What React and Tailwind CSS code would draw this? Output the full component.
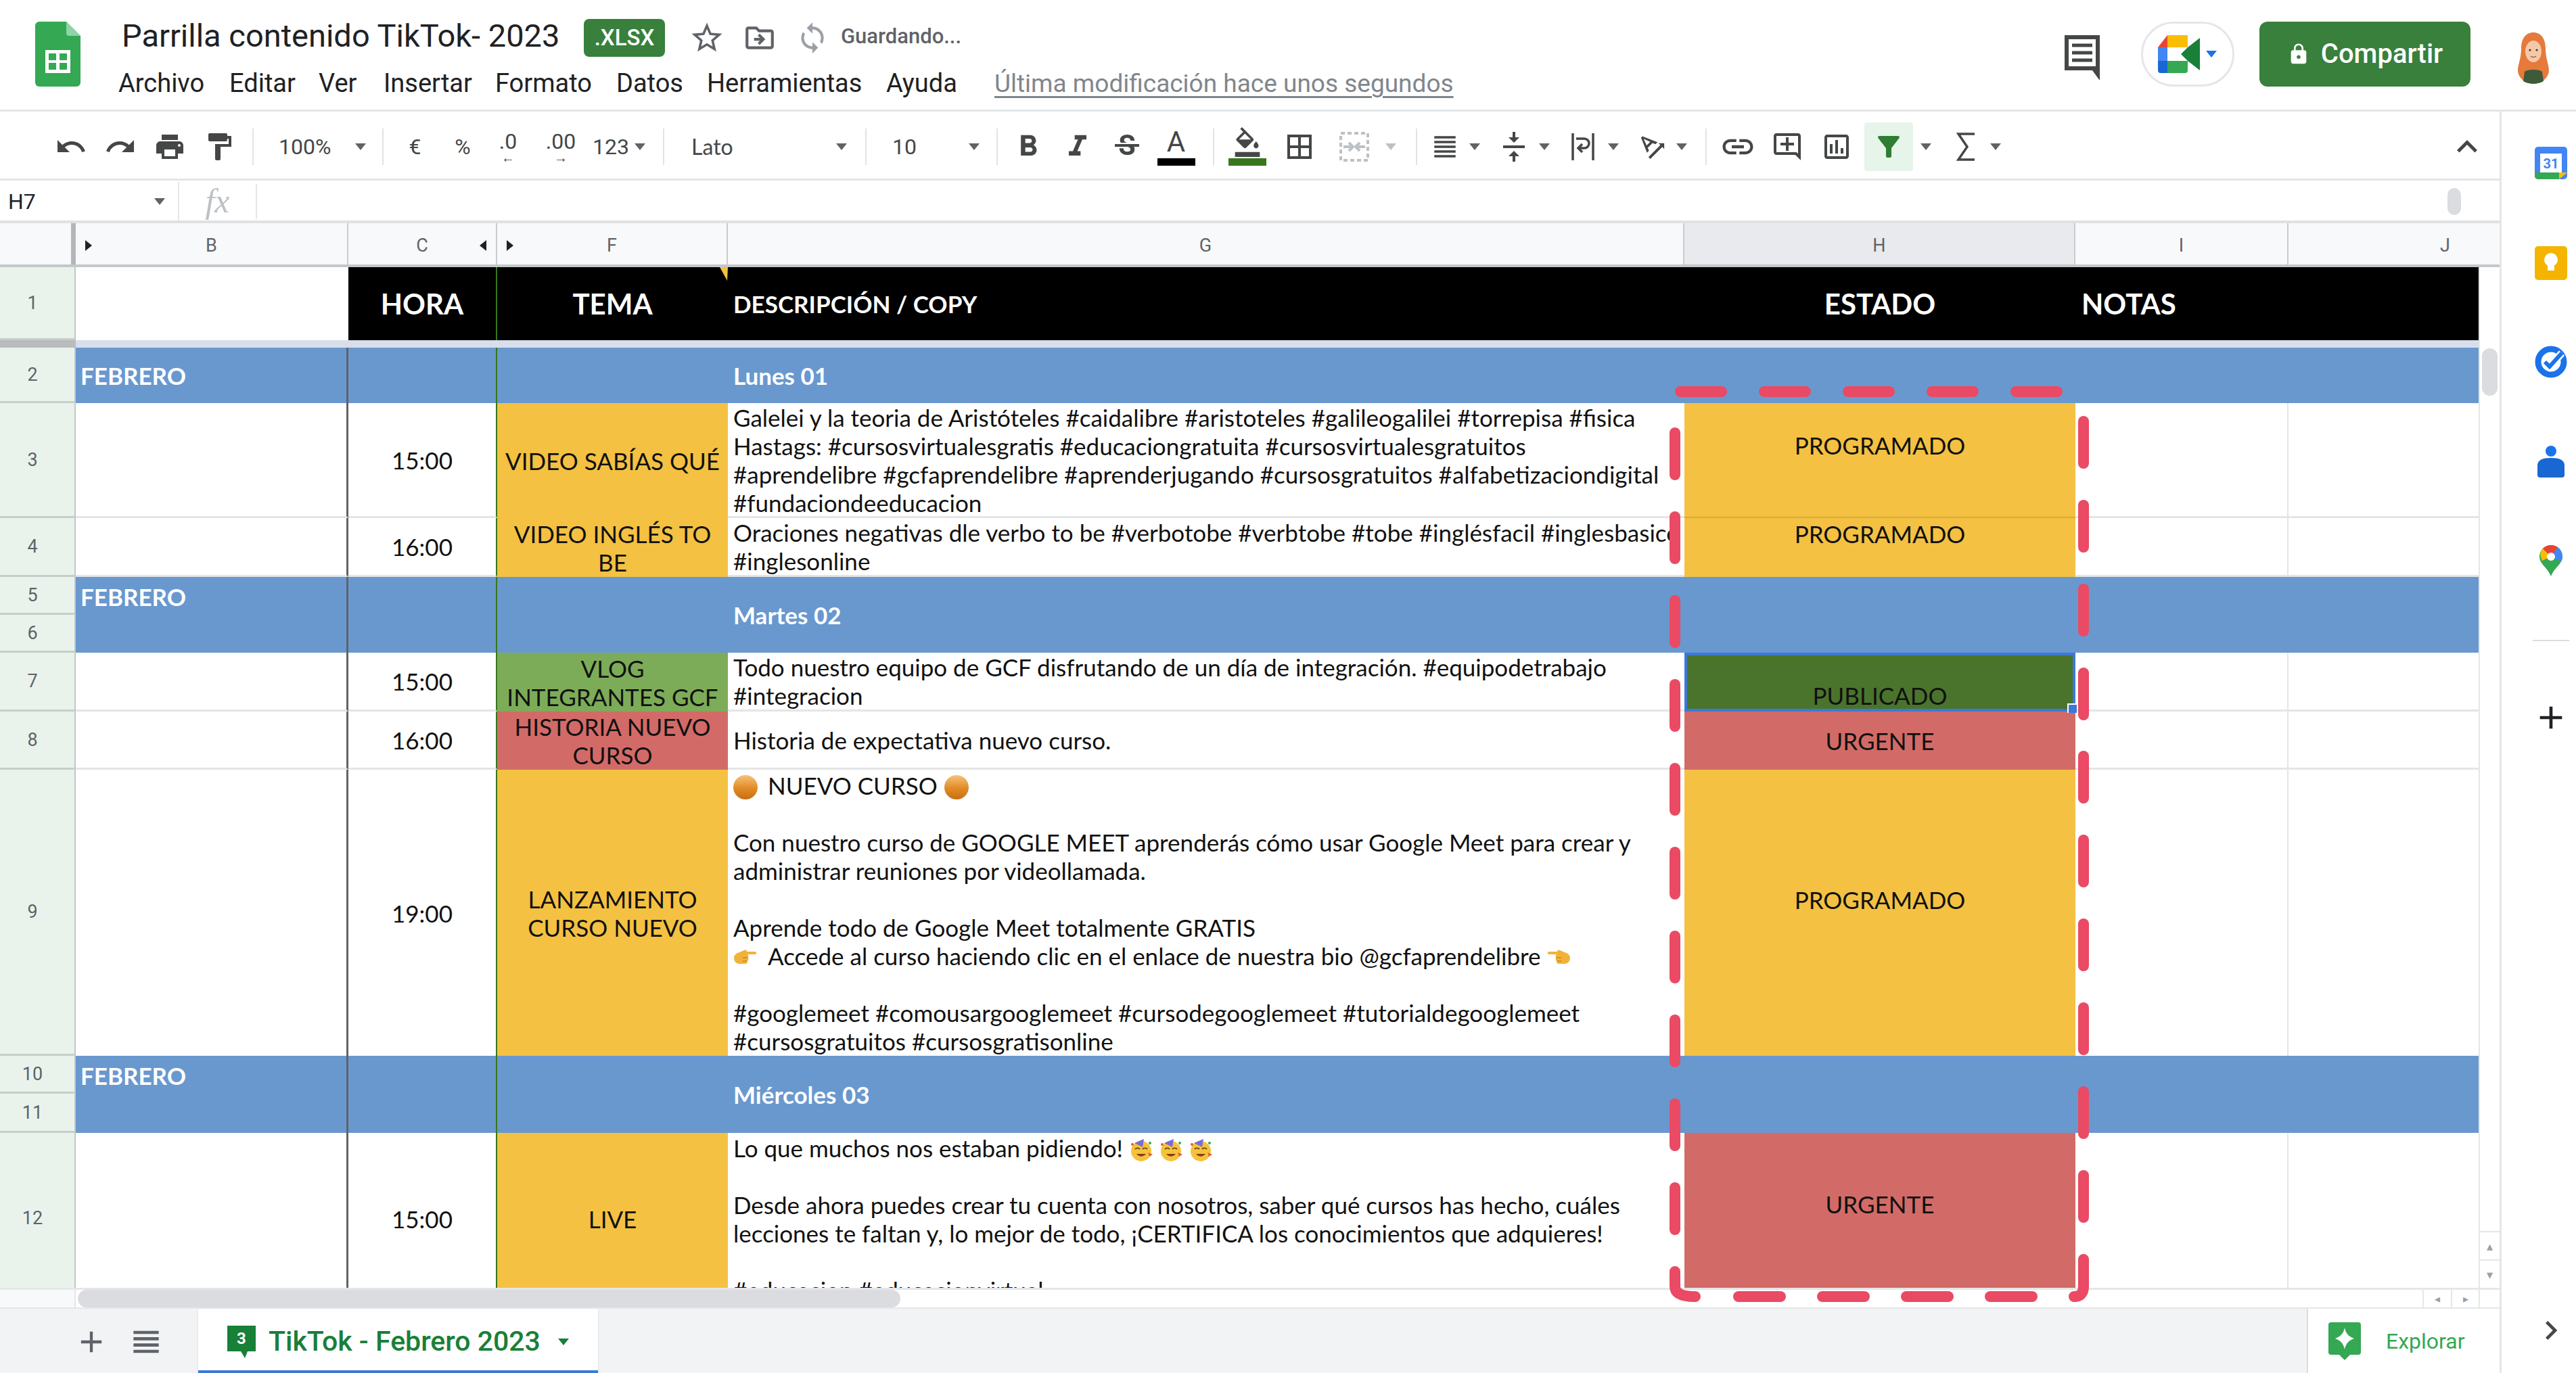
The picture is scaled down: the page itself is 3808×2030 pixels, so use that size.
import {
  MdUndo, MdRedo, MdPrint, MdFormatPaint, MdFormatBold, MdFormatItalic, MdStrikethroughS,
  MdFormatColorFill, MdBorderAll, MdFormatAlignJustify, MdVerticalAlignCenter,
  MdTextRotationAngleup, MdLink, MdOutlineAddComment, MdOutlineInsertChart, MdFilterAlt,
  MdStarBorder, MdOutlineDriveFileMove, MdSync, MdLock, MdKeyboardArrowUp, MdAdd, MdViewHeadline,
  MdChevronRight,
} from 'react-icons/md'

const ui = "font-['Roboto',sans-serif]"

const Caret = ({ className = 'ml-0', color = '#5f6368' }) => (
  <svg viewBox="0 0 18 10" className={`w-[18px] h-[10px] shrink-0 ${className}`}>
    <path d="M1 0h16l-8 10z" fill={color} />
  </svg>
)

const Sep = ({ className = '' }) => <div className={`w-[2px] h-[54px] bg-[#e1e3e6] shrink-0 ${className}`} />

const Tool = ({ className = 'w-[73px]', children }) => (
  <div className={`h-[72px] shrink-0 flex items-center justify-center ${className}`}>{children}</div>
)

const icon = 'size-[48px]'

function SheetsLogo() {
  return (
    <svg viewBox="0 0 67 96" className="w-[67px] h-[96px] ml-[52px] mt-[32px] shrink-0">
      <path d="M6 0h40l21 21v69a6 6 0 0 1-6 6H6a6 6 0 0 1-6-6V6a6 6 0 0 1 6-6z" fill="#34a853" />
      <path d="M46 0l21 21H50a4 4 0 0 1-4-4z" fill="#8fd3a6" />
      <path d="M15 42h37v34H15z" fill="#fff" />
      <path d="M20 47h11v10H20zM36 47h11v10H36zM20 61h11v10H20zM36 61h11v10H36z" fill="#34a853" />
    </svg>
  )
}

function MeetLogo() {
  return (
    <svg viewBox="0 0 62 56" className="w-[62px] h-[56px]">
      <path d="M14 0h30v18H14z" fill="#fbbc04" />
      <path d="M14 0v18H0z" fill="#ea4335" />
      <path d="M0 18h14v20H0z" fill="#4285f4" />
      <path d="M0 38h14v18H4a4 4 0 0 1-4-4z" fill="#1967d2" />
      <path d="M14 38h30v14a4 4 0 0 1-4 4H14z" fill="#34a853" />
      <path d="M44 18l18-14v48L44 38l-10-10z" fill="#188038" />
      <path d="M14 18h20v20H14z" fill="#fff" />
    </svg>
  )
}

function Avatar() {
  return (
    <svg viewBox="0 0 46 76" className="w-[46px] h-[76px]">
      <path d="M23 0c12 0 18 10 18 24 0 14 5 24 5 32 0 10-10 20-23 20S0 66 0 56c0-8 5-18 5-32C5 10 11 0 23 0z" fill="#e57a3c" />
      <path d="M10 58c4-4 22-4 26 0l2 14c-8 5-22 5-30 0z" fill="#3f5a3a" />
      <ellipse cx="23" cy="28" rx="12" ry="16" fill="#f5c9a8" />
      <circle cx="18" cy="26" r="1.6" fill="#4a3426" />
      <circle cx="28" cy="26" r="1.6" fill="#4a3426" />
      <path d="M19 35c2 2 6 2 8 0" stroke="#b5533c" strokeWidth="1.4" fill="none" />
    </svg>
  )
}

function TopBar() {
  return (
    <div className="h-[165px] shrink-0 flex border-b-[3px] border-[#e4e6e8] bg-white relative">
      <SheetsLogo />
      <div className="ml-[61px] flex flex-col">
        <div className="flex items-center mt-[28px] h-[56px]">
          <span className={`${ui} text-[47px] text-[#202124] w-[683px] whitespace-nowrap mb-[6px]`}>Parrilla contenido TikTok- 2023</span>
          <span className={`${ui} font-medium w-[120px] h-[56px] flex items-center justify-center bg-[#38803c] rounded-lg text-white text-[33px]`}>.XLSX</span>
          <MdStarBorder className="size-[54px] ml-[35px] text-[#5f6368]" />
          <MdOutlineDriveFileMove className="size-[50px] ml-[26px] text-[#5f6368]" />
          <MdSync className="size-[50px] ml-[28px] text-[#9aa0a6]" />
          <span className={`${ui} font-medium text-[31px] text-[#5f6368] ml-[17px] mb-[4px]`}>Guardando...</span>
        </div>
        <div className={`${ui} flex items-center mt-[11px] -ml-[5px] text-[38px] text-[#202124] whitespace-nowrap`}>
          <span className="w-[164px]">Archivo</span>
          <span className="w-[132px]">Editar</span>
          <span className="w-[96px]">Ver</span>
          <span className="w-[165px]">Insertar</span>
          <span className="w-[179px]">Formato</span>
          <span className="w-[134px]">Datos</span>
          <span className="w-[265px]">Herramientas</span>
          <span className="w-[160px]">Ayuda</span>
          <span className="text-[#80868b] text-[37px] underline decoration-[3px] underline-offset-[6px]">Última modificación hace unos segundos</span>
        </div>
      </div>
      <div className="ml-auto flex items-start pt-[32px]">
        <svg viewBox="0 0 52 66" className="w-[52px] h-[66px] mt-[20px]" fill="none" stroke="#444746">
          <path d="M3 3h46v46H3z" strokeWidth="6" />
          <path d="M11 15h30M11 26h30M11 37h30" strokeWidth="5" />
          <path d="M40 49h11v15z" fill="#444746" strokeWidth="2" />
        </svg>
        <div className="ml-[61px] w-[138px] h-[96px] rounded-full border-[3px] border-[#e4e6e8] flex items-center justify-center gap-[8px]">
          <MeetLogo />
          <Caret color="#1a73e8" />
        </div>
        <div className={`${ui} font-medium ml-[37px] w-[312px] h-[96px] rounded-xl bg-[#38803c] text-white text-[40px] flex items-center justify-center gap-[16px]`}>
          <MdLock className="size-[34px]" />
          Compartir
        </div>
        <div className="ml-[70px] mr-[40px] mt-[16px]"><Avatar /></div>
      </div>
    </div>
  )
}

function Toolbar() {
  return (
    <div className={`${ui} h-[102px] shrink-0 flex items-center pl-[68px] pt-[4px] border-b-[3px] border-[#e4e6e8] text-[#444746] text-[32px]`}>
      <Tool><MdUndo className={icon} /></Tool>
      <Tool><MdRedo className={icon} /></Tool>
      <Tool><MdPrint className={icon} /></Tool>
      <Tool><MdFormatPaint className={icon} /></Tool>
      <Sep className="ml-[13px]" />
      <div className="w-[190px] pl-[37px] flex items-center shrink-0">
        <span className="w-[112px]">100%</span>
        <Caret />
      </div>
      <Sep />
      <Tool className="w-[73px] ml-[10px]">€</Tool>
      <Tool className="w-[68px]">%</Tool>
      <Tool className="w-[66px] flex-col leading-[32px]"><span>.0</span><span className="text-[20px] leading-[16px]">←</span></Tool>
      <Tool className="w-[90px] flex-col leading-[32px]"><span>.00</span><span className="text-[20px] leading-[16px]">→</span></Tool>
      <Tool className="w-[58px]">123</Tool>
      <Caret className="ml-[5px]" />
      <Sep className="ml-[25px]" />
      <div className="pl-[40px] flex items-center shrink-0">
        <span className="w-[213px] font-['Lato',sans-serif]">Lato</span>
        <Caret />
      </div>
      <Sep className="ml-[26px]" />
      <div className="pl-[38px] flex items-center shrink-0">
        <span className="w-[112px]">10</span>
        <Caret />
      </div>
      <Sep className="ml-[24px]" />
      <Tool className="w-[73px] ml-[8px]"><MdFormatBold className="size-[52px]" /></Tool>
      <Tool><MdFormatItalic className="size-[52px]" /></Tool>
      <Tool><MdStrikethroughS className={icon} /></Tool>
      <Tool className="w-[73px] flex-col">
        <span className="text-[42px] leading-[44px]">A</span>
        <span className="w-[56px] h-[11px] bg-black mt-[2px]" />
      </Tool>
      <Sep className="ml-[18px]" />
      <Tool className="w-[73px] ml-[12px] flex-col">
        <MdFormatColorFill className="size-[44px]" />
        <span className="w-[56px] h-[11px] bg-[#38761d] mt-[2px]" />
      </Tool>
      <Tool className="w-[73px] ml-[4px]"><MdBorderAll className={icon} /></Tool>
      <Tool className="w-[73px] ml-[8px]">
        <svg viewBox="0 0 44 44" className="w-[44px] h-[44px]" fill="none" stroke="#bdc1c6" strokeWidth="4">
          <path d="M2 2h40v40H2z" strokeDasharray="6 4" />
          <path d="M6 22h12M38 22H26M14 16l6 6-6 6M30 16l-6 6 6 6" />
        </svg>
      </Tool>
      <Caret className="ml-[9px]" color="#bdc1c6" />
      <Sep className="ml-[28px]" />
      <Tool className="w-[70px] ml-[6px]"><MdFormatAlignJustify className="size-[42px]" /></Tool>
      <Caret />
      <Tool className="w-[72px] ml-[13px]"><MdVerticalAlignCenter className={icon} /></Tool>
      <Caret />
      <Tool className="w-[72px] ml-[12px]">
        <svg viewBox="0 0 36 44" className="w-[36px] h-[44px]" fill="none" stroke="#444746" strokeWidth="3.5">
          <path d="M3 2v40M33 2v40M8 10h12a7 7 0 0 1 0 14H13" />
          <path d="M17 18l-6 6 6 6" />
        </svg>
      </Tool>
      <Caret />
      <Tool className="w-[69px] ml-[14px]"><MdTextRotationAngleup className={icon} /></Tool>
      <Caret />
      <Sep className="ml-[26px]" />
      <Tool className="w-[72px] ml-[10px]"><MdLink className="size-[54px]" /></Tool>
      <Tool className="w-[72px] ml-[1px]"><MdOutlineAddComment className={icon} /></Tool>
      <Tool className="w-[72px] ml-[1px]"><MdOutlineInsertChart className={icon} /></Tool>
      <Tool className="w-[72px] ml-[5px] rounded bg-[#e6f4ea]"><MdFilterAlt className="size-[48px] text-[#2e7d32]" /></Tool>
      <Caret className="ml-[10px]" />
      <Tool className="w-[71px] ml-[14px]">
        <svg viewBox="0 0 30 44" className="w-[30px] h-[44px]" fill="none" stroke="#444746" strokeWidth="3.5">
          <path d="M28 3H4l13 19L4 41h24" />
        </svg>
      </Tool>
      <Caret />
      <MdKeyboardArrowUp className="size-[60px] ml-auto mr-[18px]" />
    </div>
  )
}

function FormulaBar() {
  return (
    <div className={`${ui} h-[63px] shrink-0 flex items-center pt-[2px] border-b-[4px] border-[#dfe1e4] text-[#202124] text-[32px] relative`}>
      <span className="ml-[12px] w-[215px]">H7</span>
      <Caret />
      <div className="w-[2px] h-full bg-[#e4e6e8] ml-[18px]" />
      <span className="w-[113px] text-center font-['Liberation_Serif',serif] italic text-[50px] text-[#bdc1c6]">fx</span>
      <div className="w-[2px] h-[52px] bg-[#e4e6e8]" />
      <div className="ml-auto mr-[57px] w-[20px] h-[40px] rounded-full bg-[#dadce0]" />
    </div>
  )
}

const colHeaderCell = 'h-full flex items-center justify-center pt-[5px] relative border-r-[2px] border-[#c9cccf]'

const Marker = ({ className, d }) => (
  <svg viewBox="0 0 10 16" className={`absolute w-[10px] h-[16px] ${className}`}>
    <path d={d} fill="#202124" />
  </svg>
)

function ColHeaders() {
  return (
    <div className={`${ui} h-[65px] shrink-0 grid grid-cols-[112px_403px_220px_341px_1414px_578px_315px_281px_31px] bg-[#f8f9fa] border-b-[4px] border-[#c4c7ca] text-[#5f6368] text-[27px]`}>
      <div className="h-full border-r-[7px] border-[#b4b7ba]" />
      <div className={colHeaderCell}>
        <Marker className="left-[14px]" d="M0 0l10 8-10 8z" />
        B
      </div>
      <div className={colHeaderCell}>
        C
        <Marker className="right-[14px]" d="M10 0L0 8l10 8z" />
      </div>
      <div className={colHeaderCell}>
        <Marker className="left-[14px]" d="M0 0l10 8-10 8z" />
        F
      </div>
      <div className={colHeaderCell}>G</div>
      <div className={`${colHeaderCell} bg-[#e8eaed]`}>H</div>
      <div className={colHeaderCell}>I</div>
      <div className="h-full flex items-center justify-end pt-[5px] pr-[42px]">J</div>
      <div className="h-full" />
    </div>
  )
}

const rowHeader = `${ui} flex items-center justify-center pr-[14px] bg-[#e9f3ec] text-[#5f6368] text-[27px] border-b-[3px] border-b-[#c8cdca] border-r-[2px] border-r-[#c2c8c4]`
const blue = 'bg-[#6998cf] text-white font-bold'
const blank = 'bg-white border-b-[3px] border-b-[#e4e5e6]'
const bCol = 'border-r-[3px] border-r-[#5f6368]'
const cCol = 'border-r-[2px] border-r-[#38761d]'
const iCol = 'border-r-[2px] border-r-[#e4e5e6]'
const center = 'flex items-center justify-center text-center'
const gText = 'pl-[8px] pr-[22px] overflow-hidden whitespace-nowrap text-[#111] border-b-[3px] border-b-[#e4e5e6] bg-white'

const Orb = () => (
  <svg viewBox="0 0 36 36" className="inline-block w-[36px] h-[36px] align-[-7px]">
    <defs>
      <linearGradient id="orb" x1="0" y1="0" x2="0" y2="1">
        <stop offset="0" stopColor="#f7c27a" />
        <stop offset="0.55" stopColor="#e08a26" />
        <stop offset="1" stopColor="#c96f12" />
      </linearGradient>
    </defs>
    <circle cx="18" cy="18" r="18" fill="url(#orb)" />
  </svg>
)

const Hand = ({ flip = false }) => (
  <svg viewBox="0 0 36 28" className={`inline-block w-[36px] h-[28px] align-[-3px] ${flip ? '-scale-x-100' : ''}`}>
    <path d="M1 14c0-4 4-7 8-8l7-3c2-1 4 0 4 2h12c3 0 3 4 0 4H21c1 1 2 3 1 5 1 2 0 4-1 5 0 2-1 4-3 4H9c-5 0-8-4-8-9z" fill="#f2b23a" />
    <path d="M21 14H14M20 19h-6" stroke="#c98a1e" strokeWidth="1.5" fill="none" />
  </svg>
)

const Party = () => (
  <svg viewBox="0 0 36 36" className="inline-block w-[36px] h-[36px] align-[-7px] mr-[8px]">
    <circle cx="18" cy="20" r="15" fill="#f5c33b" />
    <path d="M8 8l14-6-2 12z" fill="#7c6cd6" />
    <path d="M9 17c2-2 5-2 7 0M20 17c2-2 5-2 7 0" stroke="#6b4a12" strokeWidth="2" fill="none" />
    <path d="M11 24c4 5 10 5 14 0z" fill="#8a3b1c" />
    <path d="M28 22l7 3-5 3z" fill="#e8573f" />
    <circle cx="5" cy="10" r="2" fill="#e8573f" />
    <circle cx="31" cy="8" r="2" fill="#34a853" />
  </svg>
)

function SheetGrid() {
  return (
    <div className="w-[3664px] h-[1509px] shrink-0 overflow-hidden grid grid-cols-[112px_403px_220px_341px_1414px_578px_315px_281px] grid-rows-[108px_11px_82px_170px_87px_56px_56px_87px_86px_423px_56px_58px_254px] font-['Lato',sans-serif] text-[35px] leading-[42px] text-[#111]">
      {/* fila 1 */}
      <div className={rowHeader}>1</div>
      <div className="bg-white" />
      <div className={`bg-black text-white font-bold text-[42px] ${center} ${cCol}`}>HORA</div>
      <div className={`bg-black text-white font-bold text-[42px] ${center} relative`}>
        TEMA
        <svg viewBox="0 0 12 20" className="absolute right-0 top-0 w-[12px] h-[20px]"><path d="M0 0h12l-1 20z" fill="#f4c142" /></svg>
      </div>
      <div className="bg-black text-white font-bold text-[35px] flex items-center pl-[8px]">DESCRIPCIÓN / COPY</div>
      <div className={`bg-black text-white font-bold text-[42px] ${center}`}>ESTADO</div>
      <div className="bg-black text-white font-bold text-[42px] flex items-center pl-[9px]">NOTAS</div>
      <div className="bg-black" />

      {/* barra inmovilizada */}
      <div className="bg-[#b9bbbd]" />
      <div className="col-span-7 bg-[#d8dfeb]" />

      {/* fila 2 */}
      <div className={rowHeader}>2</div>
      <div className={`${blue} ${bCol} flex items-center pl-[7px]`}>FEBRERO</div>
      <div className={`${blue} ${cCol}`} />
      <div className={blue} />
      <div className={`${blue} flex items-center pl-[8px]`}>Lunes 01</div>
      <div className={`${blue} col-span-3`} />

      {/* fila 3 */}
      <div className={rowHeader}>3</div>
      <div className={`${blank} ${bCol}`} />
      <div className={`${blank} ${cCol} ${center}`}>15:00</div>
      <div className={`bg-[#f4c142] ${center}`}>VIDEO SABÍAS QUÉ</div>
      <div className={gText}>
        Galelei y la teoria de Aristóteles #caidalibre #aristoteles #galileogalilei #torrepisa #fisica<br />
        Hastags: #cursosvirtualesgratis #educaciongratuita #cursosvirtualesgratuitos<br />
        #aprendelibre #gcfaprendelibre #aprenderjugando #cursosgratuitos #alfabetizaciondigital<br />
        #fundaciondeeducacion
      </div>
      <div className="bg-[#f4c142] text-center pt-[41px] border-b-[2px] border-b-[#d9ab3c]">PROGRAMADO</div>
      <div className={`${blank} ${iCol}`} />
      <div className={blank} />

      {/* fila 4 */}
      <div className={rowHeader}>4</div>
      <div className={`${blank} ${bCol}`} />
      <div className={`${blank} ${cCol} ${center}`}>16:00</div>
      <div className={`bg-[#f4c142] ${center}`}>VIDEO INGLÉS TO<br />BE</div>
      <div className={gText}>
        Oraciones negativas dle verbo to be #verbotobe #verbtobe #tobe #inglésfacil #inglesbasico<br />
        #inglesonline
      </div>
      <div className="bg-[#f4c142] text-center pt-[2px]">PROGRAMADO</div>
      <div className={`${blank} ${iCol}`} />
      <div className={blank} />

      {/* filas 5 y 6 */}
      <div className={rowHeader}>5</div>
      <div className={`${blue} ${bCol} row-span-2 pl-[7px] pt-[8px]`}>FEBRERO</div>
      <div className={`${blue} ${cCol} row-span-2`} />
      <div className={`${blue} row-span-2`} />
      <div className={`${blue} row-span-2 flex items-center pl-[8px]`}>Martes 02</div>
      <div className={`${blue} col-span-3 row-span-2`} />
      <div className={rowHeader}>6</div>

      {/* fila 7 */}
      <div className={`${rowHeader} bg-[#d3e8d9]`}>7</div>
      <div className={`${blank} ${bCol}`} />
      <div className={`${blank} ${cCol} ${center}`}>15:00</div>
      <div className={`bg-[#7dac58] ${center}`}>VLOG<br />INTEGRANTES GCF</div>
      <div className={gText}>
        Todo nuestro equipo de GCF disfrutando de un día de integración. #equipodetrabajo<br />
        #integracion
      </div>
      <div className="bg-[#4a742c] border-[4px] border-[#3c78d8] flex items-end justify-center relative">
        <span className="leading-[36px] mb-[2px]">PUBLICADO</span>
        <div className="absolute -right-[6px] -bottom-[6px] size-[14px] bg-[#3c78d8] border-l-[2px] border-t-[2px] border-white" />
      </div>
      <div className={`${blank} ${iCol}`} />
      <div className={blank} />

      {/* fila 8 */}
      <div className={rowHeader}>8</div>
      <div className={`${blank} ${bCol}`} />
      <div className={`${blank} ${cCol} ${center}`}>16:00</div>
      <div className={`bg-[#d26b67] ${center}`}>HISTORIA NUEVO<br />CURSO</div>
      <div className={`${gText} flex items-center`}>Historia de expectativa nuevo curso.</div>
      <div className={`bg-[#d26b67] ${center}`}>URGENTE</div>
      <div className={`${blank} ${iCol}`} />
      <div className={blank} />

      {/* fila 9 */}
      <div className={rowHeader}>9</div>
      <div className={`bg-white ${bCol}`} />
      <div className={`bg-white ${cCol} ${center}`}>19:00</div>
      <div className={`bg-[#f4c142] ${center}`}>LANZAMIENTO<br />CURSO NUEVO</div>
      <div className="pl-[8px] overflow-hidden whitespace-nowrap bg-white pt-[2px]">
        <Orb /><span className="ml-[15px]">NUEVO CURSO</span><span className="ml-[10px]"><Orb /></span><br />
        <br />
        Con nuestro curso de GOOGLE MEET aprenderás cómo usar Google Meet para crear y<br />
        administrar reuniones por videollamada.<br />
        <br />
        Aprende todo de Google Meet totalmente GRATIS<br />
        <Hand /><span className="ml-[15px]">Accede al curso haciendo clic en el enlace de nuestra bio @gcfaprendelibre</span> <Hand flip /><br />
        <br />
        #googlemeet #comousargooglemeet #cursodegooglemeet #tutorialdegooglemeet<br />
        #cursosgratuitos #cursosgratisonline
      </div>
      <div className={`bg-[#f4c142] ${center} pb-[40px]`}>PROGRAMADO</div>
      <div className={`bg-white ${iCol}`} />
      <div className="bg-white" />

      {/* filas 10 y 11 */}
      <div className={rowHeader}>10</div>
      <div className={`${blue} ${bCol} row-span-2 pl-[7px] pt-[8px]`}>FEBRERO</div>
      <div className={`${blue} ${cCol} row-span-2`} />
      <div className={`${blue} row-span-2`} />
      <div className={`${blue} row-span-2 flex items-center pl-[8px]`}>Miércoles 03</div>
      <div className={`${blue} col-span-3 row-span-2`} />
      <div className={rowHeader}>11</div>

      {/* fila 12 */}
      <div className={rowHeader}>12</div>
      <div className={`bg-white ${bCol}`} />
      <div className={`bg-white ${cCol} ${center}`}>15:00</div>
      <div className={`bg-[#f4c142] ${center}`}>LIVE</div>
      <div className="pl-[8px] overflow-hidden whitespace-nowrap bg-white pt-[1px]">
        Lo que muchos nos estaban pidiendo! <Party /><Party /><Party /><br />
        <br />
        Desde ahora puedes crear tu cuenta con nosotros, saber qué cursos has hecho, cuáles<br />
        lecciones te faltan y, lo mejor de todo, ¡CERTIFICA los conocimientos que adquieres!<br />
        <br />
        #educacion #educacionvirtual
      </div>
      <div className={`bg-[#d26b67] ${center} pb-[44px]`}>URGENTE</div>
      <div className={`bg-white ${iCol}`} />
      <div className="bg-white" />
    </div>
  )
}

function VScroll() {
  return (
    <div className="flex-1 flex flex-col border-l-[2px] border-[#e4e6e8] bg-white">
      <div className="mt-[120px] mx-[3px] h-[70px] rounded-full bg-[#dadce0]" />
      <div className="mt-auto h-[42px] border-t-[2px] border-[#e4e6e8] flex items-center justify-center text-[#9aa0a6] text-[18px]">▴</div>
      <div className="h-[42px] border-t-[2px] border-[#e4e6e8] flex items-center justify-center text-[#9aa0a6] text-[18px]">▾</div>
    </div>
  )
}

function HScroll() {
  return (
    <div className="h-[29px] shrink-0 flex border-t-[3px] border-[#e4e6e8] bg-white">
      <div className="w-[112px] bg-[#f8f9fa] border-r-[2px] border-[#e4e6e8]" />
      <div className="ml-[3px] w-[1216px] rounded-full bg-[#dadce0]" />
      <div className="ml-auto w-[42px] border-l-[2px] border-[#e4e6e8] flex items-center justify-center text-[#9aa0a6] text-[16px]">◂</div>
      <div className="w-[41px] border-l-[2px] border-[#e4e6e8] flex items-center justify-center text-[#9aa0a6] text-[16px]">▸</div>
      <div className="w-[31px] border-l-[2px] border-[#e4e6e8]" />
    </div>
  )
}

function TabBar() {
  return (
    <div className={`${ui} flex-1 flex bg-[#f1f3f4] border-t-[2px] border-[#e4e6e8]`}>
      <MdAdd className="size-[52px] ml-[109px] mt-[23px] text-[#5f6368]" />
      <MdViewHeadline className="size-[56px] ml-[27px] mt-[21px] text-[#5f6368]" />
      <div className="ml-[49px] w-[591px] bg-white border-b-[4px] border-[#3c78d8] shadow-sm flex items-center pl-[43px] pt-[6px] text-[#188038] font-medium text-[41px] whitespace-nowrap">
        <svg viewBox="0 0 42 48" className="w-[42px] h-[48px]">
          <path d="M0 0h42v38H30l-4 10-6-10H0z" fill="#188038" />
          <text x="21" y="27" textAnchor="middle" fill="#fff" fontSize="24" fontWeight="700" fontFamily="Roboto">3</text>
        </svg>
        <span className="ml-[19px] w-[416px]">TikTok - Febrero 2023</span>
        <Caret color="#188038" className="ml-[11px]" />
      </div>
      <div className="ml-auto w-[285px] bg-white border-l-[2px] border-[#dadce0] flex items-center pl-[30px] text-[#34a853] text-[32px]">
        <svg viewBox="0 0 48 56" className="w-[48px] h-[56px]">
          <path d="M4 0h40a4 4 0 0 1 4 4v40a4 4 0 0 1-4 4H32l-8 8-8-8H4a4 4 0 0 1-4-4V4a4 4 0 0 1 4-4z" fill="#34a853" />
          <path d="M24 8c2 9 6 13 14 16-8 3-12 7-14 16-2-9-6-13-14-16 8-3 12-7 14-16z" fill="#fff" />
        </svg>
        <span className="ml-[37px]">Explorar</span>
      </div>
    </div>
  )
}

function SidePanel() {
  return (
    <div className="w-[113px] shrink-0 border-l-[3px] border-[#e4e6e8] flex flex-col items-center pl-[36px] bg-white">
      <svg viewBox="0 0 48 48" className="size-[48px] mt-[52px]">
        <rect width="48" height="48" rx="5" fill="#4285f4" />
        <path d="M8 10h32v28H8z" fill="#fff" />
        <path d="M0 38h36v10H5a5 5 0 0 1-5-5z" fill="#34a853" />
        <path d="M36 38h12l-12 10z" fill="#fbbc04" />
        <text x="24" y="32" textAnchor="middle" fontSize="20" fontWeight="700" fill="#4285f4" fontFamily="Roboto">31</text>
      </svg>
      <svg viewBox="0 0 48 50" className="w-[48px] h-[50px] mt-[99px]">
        <rect width="48" height="50" rx="5" fill="#f4b400" />
        <circle cx="24" cy="20" r="10" fill="#fff" />
        <path d="M19 28h10v8H19z" fill="#fff" />
      </svg>
      <svg viewBox="0 0 48 48" className="size-[48px] mt-[97px]" fill="none">
        <circle cx="24" cy="24" r="19" stroke="#1a73e8" strokeWidth="9" />
        <path d="M15 24l7 7 18-20" stroke="#fff" strokeWidth="11" />
        <path d="M15 24l7 7 18-20" stroke="#1a73e8" strokeWidth="6" />
      </svg>
      <svg viewBox="0 0 40 48" className="w-[40px] h-[48px] mt-[99px]">
        <circle cx="20" cy="9" r="8" fill="#1a73e8" />
        <path d="M0 30c0-8 8-11 20-11s20 3 20 11v14a4 4 0 0 1-4 4H4a4 4 0 0 1-4-4z" fill="#1967d2" />
      </svg>
      <svg viewBox="0 0 34 46" className="w-[34px] h-[46px] mt-[100px]">
        <path d="M17 0c9 0 17 7 17 17 0 11-12 16-17 29C12 33 0 28 0 17 0 7 8 0 17 0z" fill="#34a853" />
        <path d="M5 5l12 12-13 6C0 15 1 9 5 5z" fill="#fbbc04" />
        <path d="M5 5c3-3 7-5 12-5 4 0 7 1 10 3L17 17z" fill="#ea4335" />
        <path d="M27 3c4 3 7 8 7 14 0 3-1 5-2 7L17 17z" fill="#4285f4" />
        <circle cx="17" cy="17" r="6" fill="#fff" />
      </svg>
      <div className="w-[54px] h-[2px] bg-[#dadce0] mt-[94px]" />
      <MdAdd className="size-[56px] mt-[85px] text-[#202124]" />
      <MdChevronRight className="size-[56px] mt-auto mb-[35px] text-[#444746]" />
    </div>
  )
}

// Trazos rojos dibujados encima de la columna ESTADO
function DashedNote() {
  const left = [632, 756, 880, 1004, 1128, 1252, 1376, 1500, 1624, 1748]
  const right = [615, 739, 863, 987, 1110, 1234, 1358, 1482, 1606, 1730]
  const top = [2476, 2600, 2724, 2848, 2972]
  const bottom = [2562, 2686, 2810, 2934]
  return (
    <svg viewBox="0 0 3808 2030" className="absolute inset-0 w-[3808px] h-[2030px] pointer-events-none" fill="none" stroke="#ea4a63" strokeWidth="16" strokeLinecap="round">
      {top.map((x) => <path key={x} d={`M${x + 8} 579h61`} />)}
      {left.map((y) => <path key={y} d={`M2476 ${y + 8}v62`} />)}
      {right.map((y) => <path key={y} d={`M3080 ${y + 8}v62`} />)}
      {bottom.map((x) => <path key={x} d={`M${x + 8} 1917h62`} />)}
      <path d="M2476 1880v22q0 15 30 15" />
      <path d="M3080 1862v40q0 15-14 15" />
    </svg>
  )
}

export default function App() {
  return (
    <div className="relative w-[3808px] h-[2030px] flex flex-col overflow-hidden bg-white">
      <TopBar />
      <div className="flex-1 flex min-h-0">
        <div className="w-[3695px] shrink-0 flex flex-col">
          <Toolbar />
          <FormulaBar />
          <ColHeaders />
          <div className="h-[1509px] shrink-0 flex">
            <SheetGrid />
            <VScroll />
          </div>
          <HScroll />
          <TabBar />
        </div>
        <SidePanel />
      </div>
      <DashedNote />
    </div>
  )
}
